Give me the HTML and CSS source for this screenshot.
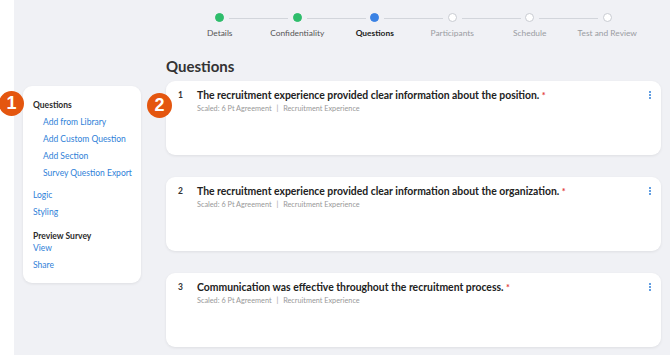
FILE: index.html
```html
<!DOCTYPE html>
<html lang="en">
<head>
  <meta charset="UTF-8" />
  <title>Survey Builder - Questions</title>
  <meta name="viewport" content="width=device-width, initial-scale=1" />
  <link rel="stylesheet" href="styles.css">
</head>
<body>
  <div class="app">
    <aside class="sidebar">
      <div class="side-card">
        <span class="badge badge-1">1</span>
        <div class="side-title">Questions</div>
        <a class="side-link sub" href="#">Add from Library</a>
        <a class="side-link sub" href="#">Add Custom Question</a>
        <a class="side-link sub" href="#">Add Section</a>
        <a class="side-link sub" href="#">Survey Question Export</a>
        <a class="side-link gap" href="#">Logic</a>
        <a class="side-link" href="#">Styling</a>
        <div class="side-title preview">Preview Survey</div>
        <a class="side-link tight" href="#">View</a>
        <a class="side-link" href="#">Share</a>
      </div>
    </aside>

    <main class="main">
      <ol class="stepper">
        <li class="step done"><span class="dot"></span><span class="label">Details</span></li>
        <li class="step done"><span class="dot"></span><span class="label">Confidentiality</span></li>
        <li class="step active"><span class="dot"></span><span class="label">Questions</span></li>
        <li class="step"><span class="dot"></span><span class="label">Participants</span></li>
        <li class="step"><span class="dot"></span><span class="label">Schedule</span></li>
        <li class="step"><span class="dot"></span><span class="label">Test and Review</span></li>
      </ol>

      <h1>Questions</h1>

      <div class="questions">
        <div class="q-card">
          <span class="badge badge-2">2</span>
          <span class="q-num">1</span>
          <div class="q-body">
            <div class="q-title">The recruitment experience provided clear information about the position. <span class="req">*</span></div>
            <div class="q-meta">Scaled: 6 Pt Agreement <span class="sep">|</span> Recruitment Experience</div>
          </div>
          <span class="kebab"><i></i><i></i><i></i></span>
        </div>
        <div class="q-card">
          <span class="q-num">2</span>
          <div class="q-body">
            <div class="q-title">The recruitment experience provided clear information about the organization. <span class="req">*</span></div>
            <div class="q-meta">Scaled: 6 Pt Agreement <span class="sep">|</span> Recruitment Experience</div>
          </div>
          <span class="kebab"><i></i><i></i><i></i></span>
        </div>
        <div class="q-card">
          <span class="q-num">3</span>
          <div class="q-body">
            <div class="q-title">Communication was effective throughout the recruitment process. <span class="req">*</span></div>
            <div class="q-meta">Scaled: 6 Pt Agreement <span class="sep">|</span> Recruitment Experience</div>
          </div>
          <span class="kebab"><i></i><i></i><i></i></span>
        </div>
      </div>
    </main>
  </div>
</body>
</html>
```

FILE: styles.css
```css
body {
  margin: 0;
  background: #fff;
  font-family: Lato, "Open Sans", sans-serif;
  color: #2b2b2b;
}
.app {
  margin-left: 14px;
  height: 355px;
  background: #f0f1f5;
  display: grid;
  grid-template-columns: 152px 495px;
}
.sidebar {
  padding: 86px 0 0 9px;
}
.side-card {
  position: relative;
  width: 118px;
  height: 197px;
  box-sizing: border-box;
  background: #fff;
  border-radius: 9px;
  box-shadow: 0 1px 3px rgba(0,0,0,0.08);
  padding: 13px 0 0 10px;
  display: flex;
  flex-direction: column;
  align-items: flex-start;
}
.side-title {
  font-size: 8.5px;
  font-weight: 700;
  color: #2b2b2b;
  line-height: 12px;
}
.side-title.preview {
  margin-top: 12px;
}
.side-link {
  font-size: 8.5px;
  color: #2f7fd8;
  text-decoration: none;
  line-height: 12px;
  margin-top: 5px;
}
.side-link.sub {
  margin-left: 10px;
}
.side-link.gap {
  margin-top: 10px;
}
.side-link.tight {
  margin-top: 0;
}
.badge {
  position: absolute;
  width: 25px;
  height: 25px;
  border-radius: 50%;
  background: #e4560f;
  color: #fff;
  font-family: "Liberation Sans", Arial, sans-serif;
  font-weight: 700;
  font-size: 18px;
  line-height: 25px;
  text-align: center;
}
.badge-1 {
  left: -24px;
  top: 5px;
}
.badge-2 {
  left: -19px;
  top: 12px;
}
.main {
  padding-top: 13px;
}
.stepper {
  list-style: none;
  margin: 0 auto;
  padding: 0;
  width: 465px;
  display: flex;
}
.step {
  position: relative;
  flex: 1;
  display: flex;
  flex-direction: column;
  align-items: center;
}
.step + .step::before {
  content: "";
  position: absolute;
  top: 5px;
  right: calc(50% + 9px);
  width: 59px;
  height: 1px;
  background: #d2d5db;
}
.dot {
  width: 9px;
  height: 9px;
  border-radius: 50%;
  box-sizing: border-box;
  background: #fff;
  border: 1px solid #c9ccd2;
}
.step.done .dot {
  background: #2ebd6b;
  border-color: #2ebd6b;
}
.step.active .dot {
  background: #3a82e4;
  border-color: #3a82e4;
}
.label {
  margin-top: 6px;
  font-size: 8.4px;
  color: #9a9ca2;
  white-space: nowrap;
}
.step.done .label {
  color: #555;
}
.step.active .label {
  color: #222;
  font-weight: 700;
}
h1 {
  margin: 18px 0 0;
  font-size: 15px;
  font-weight: 700;
  color: #333;
  line-height: 20px;
}
.questions {
  margin-top: 5px;
  display: flex;
  flex-direction: column;
  gap: 22px;
}
.q-card {
  position: relative;
  height: 74px;
  box-sizing: border-box;
  background: #fff;
  border-radius: 9px;
  box-shadow: 0 1px 3px rgba(0,0,0,0.08);
  padding: 8px 10px 0 12px;
  display: flex;
  align-items: flex-start;
}
.q-num {
  width: 19px;
  font-size: 8.5px;
  font-weight: 700;
  color: #333;
  line-height: 13px;
}
.q-body {
  flex: 1;
}
.q-title {
  font-size: 10.4px;
  font-weight: 700;
  color: #222;
  line-height: 13px;
}
.req {
  color: #e23b3b;
  font-size: 9px;
  vertical-align: top;
}
.q-meta {
  margin-top: 1px;
  font-size: 7.3px;
  color: #999;
  line-height: 11px;
}
.sep {
  margin: 0 3px;
}
.kebab {
  margin-top: 2px;
  display: flex;
  flex-direction: column;
  gap: 1px;
}
.kebab i {
  width: 2px;
  height: 2px;
  border-radius: 50%;
  background: #2f7fd8;
}
```
